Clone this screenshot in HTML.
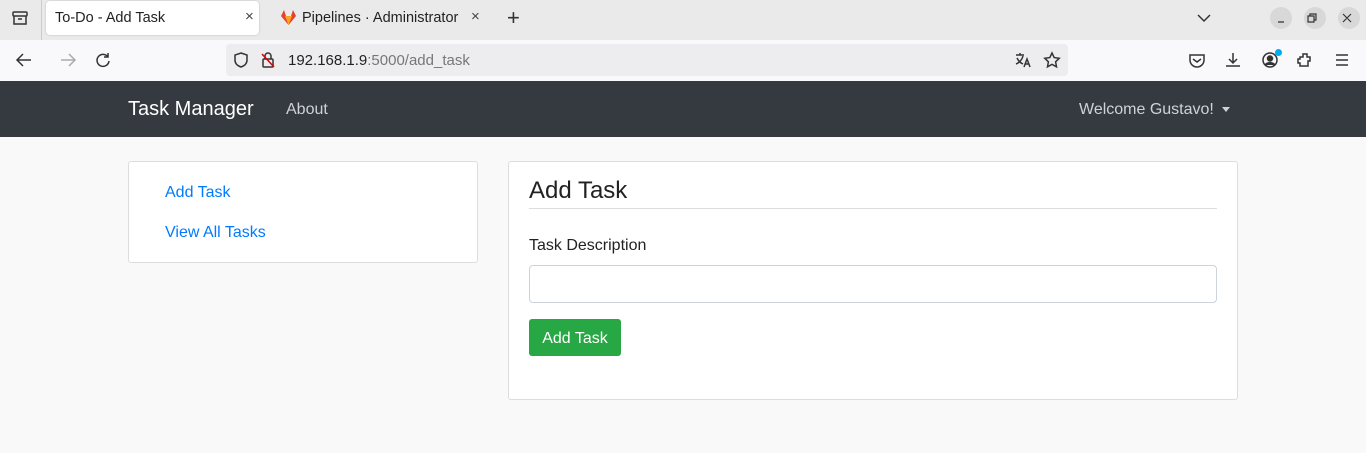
<!DOCTYPE html>
<html><head><style>
*{box-sizing:border-box;margin:0;padding:0}
body{width:1366px;height:453px;overflow:hidden;font-family:"Liberation Sans",sans-serif;background:#f9f9f9;position:relative}
.abs{position:absolute}
svg{position:absolute;fill:none;stroke:#333;stroke-width:1.5}
</style></head><body>
<div class="abs" style="left:0;top:0;width:1366px;height:40px;background:#eaeaea"></div>
<div class="abs" style="left:41px;top:0;width:1px;height:40px;background:#ccc"></div>
<svg style="left:11px;top:9px" width="18" height="18"><rect x="2" y="3" width="14" height="4" rx="1"/><path d="M3 7v8h12V7M7 10h4"/></svg>
<div class="abs" style="left:46px;top:1px;width:213px;height:34px;background:#fff;border-radius:4px;box-shadow:0 0 2px rgba(0,0,0,.2)"></div>
<div class="abs" style="left:55px;top:10px;font-size:14.5px;color:#222">To-Do - Add Task</div>
<div class="abs" style="left:245px;top:8px;font-size:15px;color:#444">×</div>
<svg style="left:280px;top:10px" width="17" height="16"><path d="M1 6l3-6 2 6h5l2-6 3 6-7.5 9z" fill="#e2432a" stroke="none"/><path d="M5 6h7l-3.5 9z" fill="#fca326" stroke="none"/></svg>
<div class="abs" style="left:302px;top:10px;font-size:14.5px;color:#222;width:162px;overflow:hidden;white-space:nowrap">Pipelines · Administrator</div>
<div class="abs" style="left:471px;top:8px;font-size:15px;color:#444">×</div>
<div class="abs" style="left:507px;top:5px;font-size:22px;color:#333;font-weight:300">+</div>
<svg style="left:1196px;top:11px" width="16" height="14"><path d="M2 4l6 6 6-6"/></svg>
<div class="abs" style="left:1270px;top:7px;width:22px;height:22px;border-radius:50%;background:#d8d8d8"></div>
<div class="abs" style="left:1304px;top:7px;width:22px;height:22px;border-radius:50%;background:#d8d8d8"></div>
<div class="abs" style="left:1338px;top:7px;width:22px;height:22px;border-radius:50%;background:#d8d8d8"></div>
<svg style="left:1270px;top:7px;stroke-width:1.2" width="100" height="22"><path d="M8 15h6M38 9h6v6h-6zM40 9V7h6v6h-2M73 7l8 8M81 7l-8 8"/></svg>
<div class="abs" style="left:0;top:40px;width:1366px;height:41px;background:#f9f9fb"></div>
<svg style="left:14px;top:51px" width="100" height="18"><path d="M17 9H3M9 3L3 9l6 6"/><path d="M47 9h14M55 3l6 6-6 6" stroke="#aaa"/><path d="M94 6a6 6 0 1 0 1 4M94 2v4h-4"/></svg>
<div class="abs" style="left:226px;top:44px;width:842px;height:32px;background:#ededf0;border-radius:4px"></div>
<svg style="left:232px;top:51px" width="60" height="18"><path d="M9 2l6 2v5c0 4-3 6-6 7-3-1-6-3-6-7V4z"/><rect x="31" y="8" width="10" height="8" rx="1"/><path d="M33 8V5a3 3 0 0 1 6 0v3"/><path d="M30 3l12 13" stroke="#d00"/></svg>
<div class="abs" style="left:288px;top:52px;font-size:15px;color:#222">192.168.1.9<span style="color:#777">:5000/add_task</span></div>
<svg style="left:1014px;top:51px" width="50" height="18"><path d="M2 4h8M6 2v2M3 7c2 4 4 5 6 6M9 5c-1 4-4 7-7 8M10 16l3-8 3 8M11 13h4"/><path d="M38 2l2.2 4.6 5 .7-3.6 3.5.9 5-4.5-2.4-4.5 2.4.9-5-3.6-3.5 5-.7z"/></svg>
<svg style="left:1188px;top:51px" width="166" height="18"><path d="M2 4h14v5a7 7 0 0 1-14 0z M5 8l4 3 4-3"/><path d="M45 2v10M41 8l4 4 4-4M38 15h14"/><circle cx="82" cy="9" r="7"/><circle cx="82" cy="7.5" r="2.5" fill="#333"/><path d="M77 14c2-3 8-3 10 0" fill="#333"/><path d="M112 6h3V3h4v3h3v4h-2v5h-8v-3h-2V8h2z"/><path d="M148 4h12M148 9h12M148 14h12"/></svg>
<div class="abs" style="left:1275px;top:49px;width:7px;height:7px;border-radius:50%;background:#0ae"></div>
<div class="abs" style="left:0;top:81px;width:1366px;height:56px;background:#343a40"></div>
<div class="abs" style="left:128px;top:98px;font-size:20px;color:#fff">Task Manager</div>
<div class="abs" style="left:286px;top:101px;font-size:16px;color:#cfd2d5">About</div>
<div class="abs" style="left:1079px;top:101px;font-size:16px;color:#cfd2d5">Welcome Gustavo!</div>
<div class="abs" style="left:1222px;top:107px;border-left:4px solid transparent;border-right:4px solid transparent;border-top:5px solid #cfd2d5"></div>
<div class="abs" style="left:128px;top:161px;width:350px;height:102px;background:#fff;border:1px solid #ddd;border-radius:3px"></div>
<div class="abs" style="left:165px;top:184px;font-size:16px;color:#007bff">Add Task</div>
<div class="abs" style="left:165px;top:224px;font-size:16px;color:#007bff">View All Tasks</div>
<div class="abs" style="left:508px;top:161px;width:730px;height:239px;background:#fff;border:1px solid #ddd;border-radius:3px"></div>
<div class="abs" style="left:529px;top:177px;font-size:24px;color:#222">Add Task</div>
<div class="abs" style="left:529px;top:208px;width:688px;height:1px;background:#ddd"></div>
<div class="abs" style="left:529px;top:237px;font-size:16px;color:#222">Task Description</div>
<div class="abs" style="left:529px;top:265px;width:688px;height:38px;border:1px solid #ced4da;border-radius:4px"></div>
<div class="abs" style="left:529px;top:319px;width:92px;height:37px;background:#28a745;border-radius:3px;color:#fff;font-size:16px;text-align:center;line-height:39px">Add Task</div>
</body></html>
